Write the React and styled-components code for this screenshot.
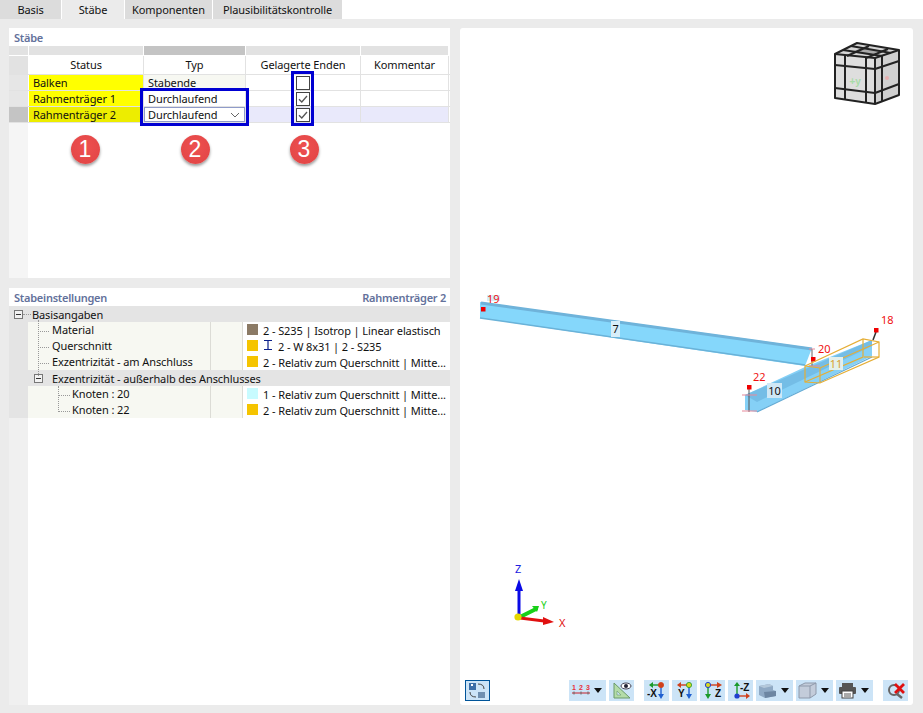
import React from "react";
import styled, { createGlobalStyle } from "styled-components";

const GlobalStyle = createGlobalStyle`
  html, body {
    margin: 0;
    padding: 0;
    background: #ebebeb;
  }
  body {
    font-family: "Noto Sans", "Liberation Sans", sans-serif;
    font-size: 11px;
    letter-spacing: -0.1px;
    color: #111;
  }
`;

const Page = styled.div`
  width: 923px;
  height: 713px;
  display: flex;
  flex-direction: column;
  overflow: hidden;
`;

const TabBar = styled.div`
  height: 19px;
  background: #fff;
  display: flex;
  flex-shrink: 0;
`;

const Tab = styled.div`
  width: ${(p) => p.$w}px;
  margin-right: 1px;
  background: ${(p) => (p.$active ? "#ebebeb" : "#dcdcdc")};
  text-align: center;
  line-height: 19px;
`;

const Body = styled.div`
  flex: 1;
  display: flex;
  gap: 10px;
  padding: 9px 10px 8px 9px;
  min-height: 0;
`;

const LeftColumn = styled.div`
  width: 441px;
  display: flex;
  flex-direction: column;
  gap: 10px;
`;

const Panel = styled.section`
  background: #fff;
  display: flex;
  flex-direction: column;
  height: ${(p) => (p.$h ? `${p.$h}px` : "auto")};
  flex: ${(p) => (p.$h ? "none" : 1)};
`;

const PanelTitle = styled.div`
  height: 18px;
  display: flex;
  justify-content: space-between;
  align-items: center;
  padding: 0 4px 0 5px;
  font-weight: 600;
  letter-spacing: -0.25px;
  color: #63719b;
`;

const TableWrap = styled.div`
  position: relative;
  flex: 1;
  display: flex;
  flex-direction: column;
`;

const TableRow = styled.div`
  display: grid;
  grid-template-columns: 20px 115px 102px 115px 88px;
  height: ${(p) => p.$h}px;
  margin-bottom: ${(p) => (p.$plain ? "1px" : "0")};
  border-bottom: ${(p) => (p.$plain ? "none" : "1px solid #e2e2e2")};
`;

const BandCell = styled.div`
  background: ${(p) => (p.$dark ? "#c4c4c4" : "#e2e2e2")};
  margin-right: 1px;
`;

const HeaderCell = styled.div`
  background: ${(p) => (p.$corner ? "#e2e2e2" : "#fff")};
  margin-right: 1px;
  text-align: center;
  line-height: 18px;
  box-shadow: ${(p) => (p.$corner ? "none" : "1px 0 0 #e2e2e2")};
`;

const RowHead = styled.div`
  background: ${(p) => (p.$active ? "#c4c4c4" : "#e6e6e6")};
  margin-right: 1px;
`;

const Cell = styled.div`
  background: ${(p) => p.$bg || "#fff"};
  box-shadow: 1px 0 0 #e2e2e2;
  margin-right: 1px;
  padding-left: ${(p) => (p.$center ? 0 : 4)}px;
  line-height: 15px;
  display: flex;
  align-items: center;
  justify-content: ${(p) => (p.$center ? "center" : "space-between")};
  position: relative;
`;

const DropBox = styled.div`
  position: absolute;
  inset: 0;
  border: 1px solid #8f9bc9;
  background: #fff;
  display: flex;
  align-items: center;
  justify-content: space-between;
  padding: 0 4px 0 3px;
`;

const Check = styled.div`
  width: 12px;
  height: 12px;
  border: 1px solid #444;
  background: #fff;
  display: flex;
  align-items: center;
  justify-content: center;
`;

const Filler = styled.div`
  flex: 1;
  display: flex;
  background: #fff;
`;

const FillerGutter = styled.div`
  width: 19px;
  background: #f5f5f5;
  margin-right: 1px;
`;

const MarkerRow = styled.div`
  flex: 1;
  display: grid;
  grid-template-columns: 112px 108px 110px;
  align-items: start;
  padding-top: 12px;
  justify-items: center;
  height: 30px;
`;

const Marker = styled.div`
  width: 29px;
  height: 29px;
  border-radius: 50%;
  background: radial-gradient(circle at 50% 40%, #ee5050, #e04444);
  box-shadow: 0 2px 3px rgba(0, 0, 0, 0.4);
  color: #fff;
  font-family: "Liberation Sans", sans-serif;
  font-size: 23px;
  letter-spacing: 0;
  line-height: 29px;
  text-align: center;
`;

const Highlight = styled.div`
  position: absolute;
  left: ${(p) => p.$x}px;
  top: ${(p) => p.$y}px;
  width: ${(p) => p.$w}px;
  height: ${(p) => p.$h}px;
  border: 3px solid #0000d2;
  box-sizing: border-box;
  pointer-events: none;
`;

const Tree = styled.div`
  flex: 1;
  display: flex;
  flex-direction: column;
  position: relative;
`;

const SectionRow = styled.div`
  height: 16px;
  background: #e4e4e4;
  display: flex;
  align-items: center;
  padding-left: ${(p) => p.$indent}px;
  position: relative;
`;

const Expander = styled.span`
  width: 5px;
  height: 5px;
  padding: 1px;
  border: 1px solid #777;
  background: #f2f2f2;
  display: inline-flex;
  align-items: center;
  justify-content: center;
  margin-right: 9px;
  flex-shrink: 0;
  &::before {
    content: "";
    width: 5px;
    height: 1px;
    background: #333;
  }
`;

const DataRow = styled.div`
  height: 16px;
  display: grid;
  grid-template-columns: 19px 182px 33px 1fr;
`;

const Gutter = styled.div`
  background: #e4e4e4;
`;

const LabelCell = styled.div`
  background: #f7f8f2;
  padding-left: ${(p) => p.$indent}px;
  line-height: 16px;
  white-space: nowrap;
`;

const SpareCell = styled.div`
  background: #f7f8f2;
  border-left: 1px solid #dcdcd6;
  border-right: 1px solid #dcdcd6;
`;

const ValueCell = styled.div`
  padding-left: 4px;
  display: flex;
  align-items: center;
  white-space: nowrap;
  overflow: hidden;
`;

const Swatch = styled.span`
  width: 11px;
  height: 11px;
  background: ${(p) => p.$c};
  margin-right: 5px;
  flex-shrink: 0;
  margin-top: -2px;
`;

const BeamIcon = styled.svg`
  margin: -2px 5px 0 0;
  flex-shrink: 0;
`;

const TreeRest = styled.div`
  flex: 1;
  display: flex;
`;

const TreeRestGutter = styled.div`
  width: 19px;
  background: #f0f0f0;
`;

const DotLine = styled.div`
  position: absolute;
  left: ${(p) => p.$x}px;
  top: ${(p) => p.$y}px;
  width: ${(p) => p.$w || 1}px;
  height: ${(p) => p.$h || 1}px;
  border-left: ${(p) => (p.$h ? "1px dotted #999" : "none")};
  border-top: ${(p) => (p.$w ? "1px dotted #999" : "none")};
  box-sizing: border-box;
`;

const Viewport = styled.section`
  flex: 1;
  background: #fff;
  border-radius: 3px;
  display: flex;
  flex-direction: column;
`;

const Scene = styled.svg`
  display: block;
  flex: none;
`;

const Toolbar = styled.div`
  height: 29px;
  box-sizing: border-box;
  padding: 4px 5px 0;
  display: flex;
  align-items: flex-start;
`;

const ToolGroup = styled.div`
  display: flex;
  gap: ${(p) => p.$gap ?? 3}px;
  margin-left: ${(p) => p.$ml || 0}px;
`;

const ToolButton = styled.div`
  width: ${(p) => p.$w || 25}px;
  height: 21px;
  background: #cce4f7;
  display: flex;
  align-items: center;
  justify-content: ${(p) => (p.$split ? "flex-start" : "center")};
  padding-left: ${(p) => (p.$split ? 2 : 0)}px;
  box-sizing: border-box;
  position: relative;
  border: ${(p) => (p.$outlined ? "1px solid #005499" : "none")};
  &::after {
    content: "";
    display: ${(p) => (p.$split ? "block" : "none")};
    position: absolute;
    right: 4px;
    top: 8px;
    border-left: 4px solid transparent;
    border-right: 4px solid transparent;
    border-top: 5px solid #111;
  }
`;

const Mini = styled.svg`
  display: block;
`;

const CheckMark = () => (
  <svg width="10" height="10" viewBox="0 0 10 10">
    <path d="M1 5.2 L3.8 8 L9 2" fill="none" stroke="#555" strokeWidth="1.3" />
  </svg>
);

const Chevron = () => (
  <svg width="10" height="6" viewBox="0 0 10 6">
    <path d="M1 1 L5 5 L9 1" fill="none" stroke="#666" strokeWidth="1" />
  </svg>
);

const IBeam = () => (
  <BeamIcon width="10" height="12" viewBox="0 0 10 12">
    <path d="M1 1.5 H9 M5 1.5 V10.5 M1 10.5 H9" stroke="#0b1f8a" strokeWidth="1.2" fill="none" />
  </BeamIcon>
);

const GLYPH = { fontSize: 10, fontWeight: 700, fill: "#111", fontFamily: "Liberation Sans" };

// green/red arrow to the left, blue arrow down, dot in the corner
const AxisLeft = ({ label, lx, arrow, dot, ring }) => (
  <Mini width="20" height="19" viewBox="0 0 20 19">
    <path d="M14 4 H5" stroke={arrow} strokeWidth="1.4" />
    <path d="M6 1 L2 4 L6 7 Z" fill={arrow} />
    <path d="M14 4 V14" stroke="#2060d0" strokeWidth="1.4" />
    <path d="M11 13 L14 18 L17 13 Z" fill="#2060d0" />
    <circle cx="14" cy="4" r="2.6" fill={dot} stroke={ring} strokeWidth="0.8" />
    <text x={lx} y="16" {...GLYPH}>{label}</text>
  </Mini>
);

const AxisZ = () => (
  <Mini width="20" height="19" viewBox="0 0 20 19">
    <path d="M5 4 H15" stroke="#d0401a" strokeWidth="1.4" />
    <path d="M14 1 L19 4 L14 7 Z" fill="#d0401a" />
    <path d="M5 4 V14" stroke="#1a9a2a" strokeWidth="1.4" />
    <path d="M2 13 L5 18 L8 13 Z" fill="#1a9a2a" />
    <circle cx="5" cy="4" r="2.6" fill="#d8d820" stroke="#2040d0" strokeWidth="1" />
    <text x="12" y="16" {...GLYPH}>Z</text>
  </Mini>
);

const AxisMinusZ = () => (
  <Mini width="20" height="19" viewBox="0 0 20 19">
    <path d="M6 15 V3" stroke="#1a9a2a" strokeWidth="1.4" />
    <path d="M3 5 L6 1 L9 5 Z" fill="#1a9a2a" />
    <path d="M6 15 H16" stroke="#d0401a" strokeWidth="1.4" />
    <path d="M15 12 L19 15 L15 18 Z" fill="#d0401a" />
    <circle cx="6" cy="15" r="2.6" fill="#2040d0" />
    <text x="9" y="10" {...GLYPH}>-Z</text>
  </Mini>
);

const CubeGizmo = () => (
  <g>
    <path d="M375 26 L397 15 L439 22 L439 67 L415 76 L375 70 Z" fill="#dedede" />
    <path d="M415 30 L439 22 L439 67 L415 76 Z" fill="#d0d0d0" />
    <path d="M375 26 L397 15 L439 22 L415 30 Z" fill="#d6d6d6" />
    <path d="M391 24 L402 20 L421 23 L409 27 Z" fill="#a9a9a9" />
    <g stroke="#222" strokeWidth="2" fill="none" strokeLinejoin="round">
      <path d="M375 26 L397 15 L439 22 L439 67 L415 76 L375 70 Z" />
      <path d="M375 26 L415 30 L415 76" />
      <path d="M415 30 L439 22" />
      <path d="M375 37 L415 41 L439 33" />
      <path d="M375 60 L415 65 L439 56" />
      <path d="M385 27 V71" />
      <path d="M406 29 V75" />
      <path d="M422 28 V73" />
      <path d="M383 22 L422 28" />
      <path d="M391 18 L431 25" />
      <path d="M387 28 L409 18" />
      <path d="M406 30 L428 21" />
    </g>
    <text x="395" y="57" textAnchor="middle" fontSize="10" fontWeight="700" fill="#a8dca8" fontFamily="Liberation Sans">+y</text>
    <circle cx="427" cy="50" r="2" fill="#e8b0b0" />
  </g>
);

const NodeLabel = ({ x, y, children }) => (
  <text x={x} y={y} fontSize="11" fill="#f01010" fontFamily="Noto Sans">{children}</text>
);

const Node = ({ x, y }) => <rect x={x} y={y} width="4.5" height="4.5" fill="#f00000" />;

const MemberLabel = ({ x, y, w, h = 14, bg, color, children }) => (
  <g>
    <rect x={x} y={y} width={w} height={h} fill={bg} />
    <text x={x + w / 2} y={y + h / 2 + 4} textAnchor="middle" fontSize="11" fill={color} fontFamily="Noto Sans">{children}</text>
  </g>
);

const AxesTriad = () => (
  <g>
    <path d="M59 589 V560" stroke="#0a0ae6" strokeWidth="3" />
    <path d="M55 563 L59 551 L63 563 Z" fill="#0a0ae6" />
    <text x="55" y="545" fontSize="11" fill="#2020e0" fontFamily="Noto Sans">Z</text>
    <path d="M60 589 L76 581" stroke="#18d018" strokeWidth="4" strokeLinecap="round" />
    <path d="M72 578 L79 578 L77 584 Z" fill="#18d018" />
    <text x="81" y="581" fontSize="10" fill="#18d018" fontFamily="Noto Sans">Y</text>
    <path d="M60 590 L84 593" stroke="#e01010" strokeWidth="3" />
    <path d="M83 589 L94 594 L83 597 Z" fill="#e01010" />
    <text x="99" y="599" fontSize="11" fill="#e01010" fontFamily="Noto Sans">X</text>
    <circle cx="58" cy="589" r="3.6" fill="#e6d800" />
  </g>
);

const ModelScene = () => (
  <Scene viewBox="0 0 453 648" width="453" height="648">
    <CubeGizmo />
    <AxesTriad />

    <path d="M20 274 L352 320 L345 338 L20 290 Z" fill="#85d7fb" />
    <path d="M21 275 L352 321" stroke="#6fb3da" strokeWidth="3" />
    <path d="M20 290 L345 337" stroke="#6ab2d8" strokeWidth="1.5" />
    <MemberLabel x={151} y={293} w={9} h={16} bg="#d7eef9" color="#111">7</MemberLabel>
    <path d="M27 270 H40" stroke="#d8edf8" strokeWidth="6" />
    <Node x={21} y={279} />
    <NodeLabel x={27} y={275}>19</NodeLabel>

    <path d="M285 367 L345 339 L412 312 L412 328 L297 384 L285 382 Z" fill="#85d0f6" />
    <path d="M285 367 L412 312 L412 318 L297 374 Z" fill="#74bde6" />
    <path d="M297 384 L412 329" stroke="#62aad4" strokeWidth="1.3" />
    <path d="M289 359 V384" stroke="#555" strokeWidth="1" />
    <path d="M282 367 H297 M282 383 H297" stroke="#e88a9a" strokeWidth="1.2" />
    <Node x={287} y={357} />
    <NodeLabel x={293} y={353}>22</NodeLabel>
    <MemberLabel x={307} y={355} w={15} h={15} bg="#cfe8f6" color="#111">10</MemberLabel>

    <path d="M352 321 V338" stroke="#666" strokeWidth="1" />
    <path d="M349 321 H355 M349 338 H360" stroke="#e88a9a" strokeWidth="1" />
    <Node x={351} y={329} />
    <NodeLabel x={358} y={325}>20</NodeLabel>

    <path d="M412 314 L419 314 L419 329 L412 329 Z" fill="#fff" />
    <g stroke="#e5ae36" strokeWidth="1.2" fill="none">
      <path d="M345 338 L403 311 L419 314 L419 329 L360 355 L345 354 Z" />
      <path d="M345 338 L360 340 L419 314" />
      <path d="M360 340 V355" />
      <path d="M403 311 V329 L345 354" />
      <path d="M404 329 L419 329" />
    </g>
    <path d="M416 304 L413 312" stroke="#333" strokeWidth="1.5" />
    <Node x={414} y={300} />
    <NodeLabel x={421} y={296}>18</NodeLabel>
    <MemberLabel x={369} y={329} w={14} h={13} bg="#e4f0ec" color="#d8a030">11</MemberLabel>
  </Scene>
);

const members = [
  { name: "Balken", typ: "Stabende", checked: false, yellow: "#ffff00", typBg: "#f7f8f2" },
  { name: "Rahmenträger 1", typ: "Durchlaufend", checked: true, yellow: "#ffff00" },
  { name: "Rahmenträger 2", typ: "Durchlaufend", checked: true, yellow: "#eded00", active: true },
];

const cols = ["Status", "Typ", "Gelagerte Enden", "Kommentar"];

const tree = [
  { label: "Material", indent: 24, swatch: "#8b7a65", value: "2 - S235 | Isotrop | Linear elastisch" },
  { label: "Querschnitt", indent: 24, swatch: "#f5c400", beam: true, value: "2 - W 8x31 | 2 - S235" },
  { label: "Exzentrizität - am Anschluss", indent: 24, swatch: "#f5c400", value: "2 - Relativ zum Querschnitt | Mitte..." },
  { section: true, label: "Exzentrizität - außerhalb des Anschlusses" },
  { label: "Knoten : 20", indent: 44, swatch: "#c8fbff", value: "1 - Relativ zum Querschnitt | Mitte..." },
  { label: "Knoten : 22", indent: 44, swatch: "#f5c400", value: "2 - Relativ zum Querschnitt | Mitte..." },
];

export default function App() {
  return (
    <Page>
      <GlobalStyle />
      <TabBar>
        <Tab $w={61}>Basis</Tab>
        <Tab $w={62} $active>Stäbe</Tab>
        <Tab $w={87}>Komponenten</Tab>
        <Tab $w={129}>Plausibilitätskontrolle</Tab>
      </TabBar>
      <Body>
        <LeftColumn>
          <Panel $h={250}>
            <PanelTitle>Stäbe</PanelTitle>
            <TableWrap>
              <TableRow $h={9} $plain>
                <BandCell />
                <BandCell />
                <BandCell $dark />
                <BandCell />
                <BandCell />
              </TableRow>
              <TableRow $h={18}>
                <HeaderCell $corner />
                {cols.map((c) => (
                  <HeaderCell key={c}>{c}</HeaderCell>
                ))}
              </TableRow>
              {members.map((m) => (
                <TableRow $h={15} key={m.name}>
                  <RowHead $active={m.active} />
                  <Cell $bg={m.yellow}>{m.name}</Cell>
                  <Cell $bg={m.typBg}>
                    {m.active ? (
                      <DropBox>
                        {m.typ}
                        <Chevron />
                      </DropBox>
                    ) : (
                      m.typ
                    )}
                  </Cell>
                  <Cell $center $bg={m.active ? "#e9e9fb" : "#fff"}>
                    <Check>{m.checked && <CheckMark />}</Check>
                  </Cell>
                  <Cell $bg={m.active ? "#e9e9fb" : "#fff"} />
                </TableRow>
              ))}
              <Filler>
                <FillerGutter />
                <MarkerRow>
                  <Marker>1</Marker>
                  <Marker>2</Marker>
                  <Marker>3</Marker>
                </MarkerRow>
              </Filler>
              <Highlight $x={131} $y={42} $w={109} $h={38} />
              <Highlight $x={282} $y={25} $w={23} $h={55} />
            </TableWrap>
          </Panel>
          <Panel>
            <PanelTitle>
              <span>Stabeinstellungen</span>
              <span>Rahmenträger 2</span>
            </PanelTitle>
            <Tree>
              <SectionRow $indent={5}>
                <Expander />
                Basisangaben
              </SectionRow>
              {tree.map((row) =>
                row.section ? (
                  <SectionRow $indent={25} key={row.label}>
                    <Expander />
                    {row.label}
                  </SectionRow>
                ) : (
                  <DataRow key={row.label}>
                    <Gutter />
                    <LabelCell $indent={row.indent}>{row.label}</LabelCell>
                    <SpareCell />
                    <ValueCell>
                      <Swatch $c={row.swatch} />
                      {row.beam && <IBeam />}
                      {row.value}
                    </ValueCell>
                  </DataRow>
                )
              )}
              <TreeRest>
                <TreeRestGutter />
              </TreeRest>
              <DotLine $x={14} $y={8} $w={8} />
              <DotLine $x={29} $y={14} $h={56} />
              <DotLine $x={29} $y={25} $w={11} />
              <DotLine $x={29} $y={41} $w={11} />
              <DotLine $x={29} $y={57} $w={11} />
              <DotLine $x={49} $y={80} $h={26} />
              <DotLine $x={49} $y={89} $w={12} />
              <DotLine $x={49} $y={105} $w={12} />
            </Tree>
          </Panel>
        </LeftColumn>
        <Viewport>
          <ModelScene />
          <Toolbar>
            <ToolButton $outlined>
              <Mini width="19" height="17" viewBox="0 0 19 17">
                <rect x="1" y="1" width="7" height="7" fill="#3a6ea8" />
                <rect x="3" y="2" width="2" height="2" fill="#fff" />
                <rect x="10" y="10" width="7" height="6" fill="#6f8fb0" />
                <path d="M10 2 Q16 2 16 7" stroke="#444" fill="none" />
                <path d="M2 10 Q2 15 8 15" stroke="#444" fill="none" />
              </Mini>
            </ToolButton>
            <ToolGroup $ml={79}>
              <ToolButton $w={37} $split>
                <Mini width="20" height="17" viewBox="0 0 20 17">
                  <text x="1" y="8" fontSize="7" fontWeight="700" fill="#e8303a" fontFamily="Liberation Sans">1</text>
                  <text x="8" y="8" fontSize="7" fontWeight="700" fill="#e8303a" fontFamily="Liberation Sans">2</text>
                  <text x="15" y="8" fontSize="7" fontWeight="700" fill="#e8303a" fontFamily="Liberation Sans">3</text>
                  <path d="M1 11 H19" stroke="#c8202a" strokeWidth="1" />
                  <path d="M3 9.5 V12.5 M10 9.5 V12.5 M17 9.5 V12.5" stroke="#666" strokeWidth="1" />
                </Mini>
              </ToolButton>
              <ToolButton>
                <Mini width="20" height="19" viewBox="0 0 20 19">
                  <path d="M2 2 L2 17 L18 17 Z" fill="#b4dca8" stroke="#6a9a6a" />
                  <path d="M5 10 V14 H9 Z" fill="#cce4f7" stroke="#6a9a6a" strokeWidth="0.6" />
                  <ellipse cx="14" cy="5" rx="5" ry="3" fill="#fff" stroke="#445" />
                  <circle cx="14" cy="5" r="2" fill="#223" />
                </Mini>
              </ToolButton>
            </ToolGroup>
            <ToolGroup $ml={10}>
              <ToolButton>
                <AxisLeft label="-X" lx={0} arrow="#1a9a2a" dot="#d0401a" ring="#d0401a" />
              </ToolButton>
              <ToolButton>
                <AxisLeft label="Y" lx={3} arrow="#d0401a" dot="#d8d820" ring="#1a9a2a" />
              </ToolButton>
              <ToolButton><AxisZ /></ToolButton>
              <ToolButton><AxisMinusZ /></ToolButton>
              <ToolButton $w={37} $split>
                <Mini width="19" height="16" viewBox="0 0 19 16">
                  <path d="M1 3 L11 1 L15 3 V7 L18 8 V13 L7 15 L1 12 Z" fill="#8fa9c4" />
                  <path d="M1 3 L11 1 L15 3 L6 5 Z" fill="#b4c8da" />
                  <path d="M6 9 L18 8 V13 L7 15 Z" fill="#6d86a2" />
                </Mini>
              </ToolButton>
              <ToolButton $w={37} $split>
                <Mini width="19" height="17" viewBox="0 0 19 17">
                  <path d="M1 4 L7 1 H18 V12 L12 16 H1 Z" fill="#c3ccda" stroke="#8e99aa" />
                  <path d="M1 4 H12 V16 M12 4 L18 1" stroke="#8e99aa" fill="none" />
                </Mini>
              </ToolButton>
              <ToolButton $w={37} $split>
                <Mini width="19" height="17" viewBox="0 0 19 17">
                  <rect x="4" y="1" width="11" height="4" fill="#555" />
                  <rect x="1" y="5" width="17" height="7" rx="1" fill="#555" />
                  <rect x="4" y="9" width="11" height="7" fill="#fff" stroke="#444" />
                  <path d="M6 12 H13 M6 14 H13" stroke="#555" />
                </Mini>
              </ToolButton>
            </ToolGroup>
            <ToolGroup $ml={10}>
              <ToolButton>
                <Mini width="20" height="17" viewBox="0 0 20 17">
                  <circle cx="8" cy="8" r="5" fill="none" stroke="#666" strokeWidth="2" />
                  <path d="M11 12 L16 16" stroke="#666" strokeWidth="2.5" />
                  <path d="M9 2 L18 11 M18 2 L9 11" stroke="#e01010" strokeWidth="2.8" />
                </Mini>
              </ToolButton>
            </ToolGroup>
          </Toolbar>
        </Viewport>
      </Body>
    </Page>
  );
}
